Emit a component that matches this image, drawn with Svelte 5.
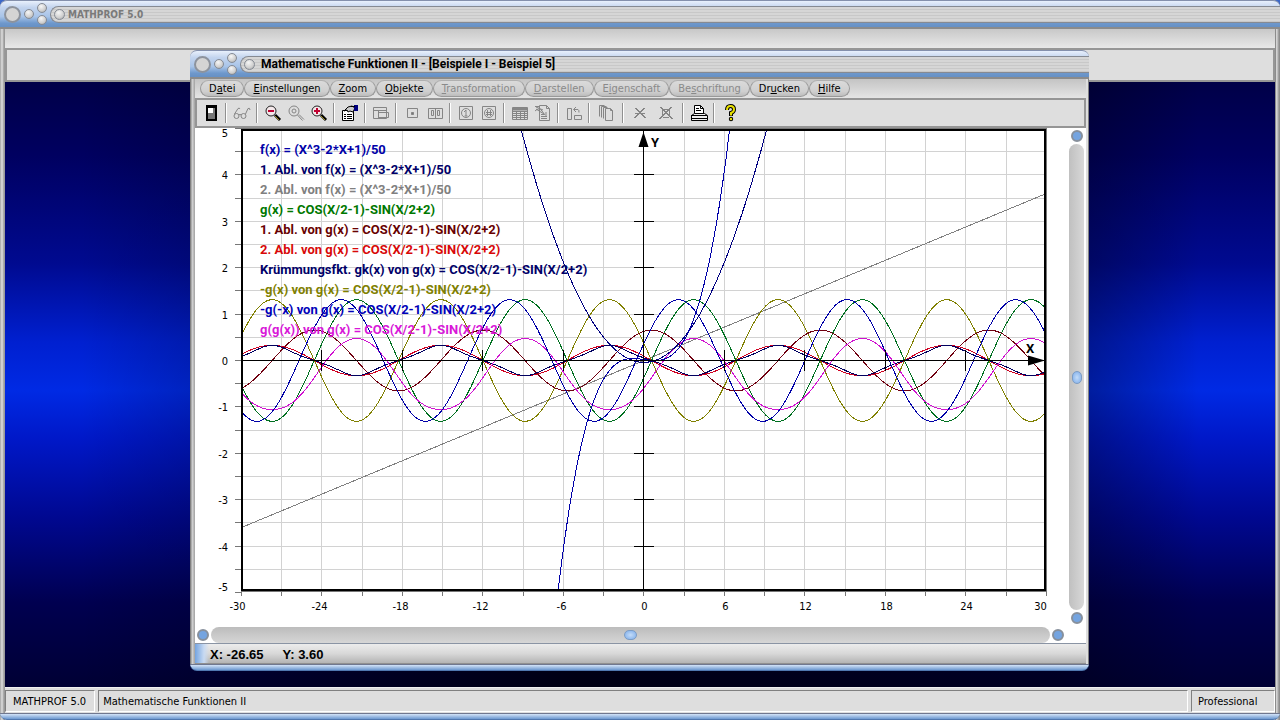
<script>
  const menus = [
    { pre: 'D', key: 'a', post: 'tei' },
    { pre: '', key: 'E', post: 'instellungen' },
    { pre: '', key: 'Z', post: 'oom' },
    { pre: '', key: 'O', post: 'bjekte' },
    { pre: '', key: 'T', post: 'ransformation', off: true },
    { pre: '', key: 'D', post: 'arstellen', off: true },
    { pre: 'E', key: 'i', post: 'genschaft', off: true },
    { pre: 'Be', key: 's', post: 'chriftung', off: true },
    { pre: 'Dr', key: 'u', post: 'cken' },
    { pre: '', key: 'H', post: 'ilfe' }
  ];

  const tools = [
    [{ id: 'panel', label: 'Fenster' }],
    [{ id: 'glasses', label: 'Ansicht', off: true }],
    [
      { id: 'zoomout', label: 'Verkleinern' },
      { id: 'zoomreset', label: 'Originalansicht', off: true },
      { id: 'zoomin', label: 'Vergrößern' }
    ],
    [{ id: 'props', label: 'Eigenschaften' }],
    [{ id: 'layout', label: 'Layout', off: true }],
    [
      { id: 'point', label: 'Punkt', off: true },
      { id: 'points', label: 'Punkte', off: true }
    ],
    [
      { id: 'info', label: 'Information', off: true },
      { id: 'hash', label: 'Werte', off: true }
    ],
    [
      { id: 'table', label: 'Tabelle', off: true },
      { id: 'report', label: 'Bericht', off: true }
    ],
    [{ id: 'swap', label: 'Tauschen', off: true }],
    [{ id: 'pages', label: 'Seiten', off: true, wide: true }],
    [
      { id: 'cross', label: 'Löschen', off: true, wide: true },
      { id: 'crossall', label: 'Alle löschen', off: true, wide: true }
    ],
    [{ id: 'print', label: 'Drucken' }],
    [{ id: 'help', label: 'Hilfe' }]
  ];

  // Plot geometry in view box units
  const OX = 448.9;
  const OY = 232.5;
  const UX = 13.42;
  const UY = 46.4;
  const px = (x) => Math.round(OX + x * UX - 0.5) + 0.5;
  const py = (y) => Math.round(OY - y * UY - 0.5) + 0.5;

  const g = (x) => Math.cos(x / 2 - 1) - Math.sin(x / 2 + 2);
  const g1 = (x) => -Math.sin(x / 2 - 1) / 2 - Math.cos(x / 2 + 2) / 2;
  const g2 = (x) => -Math.cos(x / 2 - 1) / 4 + Math.sin(x / 2 + 2) / 4;

  const curves = [
    { color: '#808080', fn: (x) => (6 * x) / 50 },
    { color: '#808000', fn: (x) => -g(x) },
    { color: '#007020', fn: g },
    { color: '#700010', fn: g1 },
    { color: '#d00020', fn: g2 },
    { color: '#000060', fn: (x) => g2(x) / Math.pow(1 + g1(x) ** 2, 1.5) },
    { color: '#d010d0', fn: (x) => g(g(x)) },
    { color: '#0000a8', fn: (x) => -g(-x) },
    { color: '#000080', fn: (x) => (3 * x * x - 2) / 50 },
    { color: '#0000a8', fn: (x) => (x ** 3 - 2 * x + 1) / 50 }
  ];

  function trace(fn) {
    const pts = [];
    for (let x = -30; x <= 30; x += 0.1) {
      const y = fn(x);
      if (Math.abs(y) < 6) pts.push(`${(OX + x * UX).toFixed(1)},${(OY - y * UY).toFixed(1)}`);
    }
    return pts.join(' ');
  }

  const G = 'g(x) = COS(X/2-1)-SIN(X/2+2)';
  const F = 'f(x) = (X^3-2*X+1)/50';
  const legend = [
    { color: '#0000a8', text: F },
    { color: '#000068', text: '1. Abl. von ' + F },
    { color: '#808080', text: '2. Abl. von ' + F },
    { color: '#007800', text: G },
    { color: '#680000', text: '1. Abl. von ' + G },
    { color: '#d80808', text: '2. Abl. von ' + G },
    { color: '#000068', text: 'Krümmungsfkt. gk(x) von ' + G },
    { color: '#808000', text: '-g(x) von ' + G },
    { color: '#0000b8', text: '-g(-x) von ' + G },
    { color: '#d818d8', text: 'g(g(x)) von ' + G }
  ];

  const xs = Array.from({ length: 21 }, (_, i) => -30 + i * 3);
  const ys = Array.from({ length: 21 }, (_, i) => -5 + i * 0.5);
  const xLabels = xs.filter((v) => v % 6 === 0);
  const yLabels = ys.filter((v) => Number.isInteger(v));
  const labelX = (v) => (v === -30 ? px(v) - 4 : v === 30 ? px(v) - 6 : v < 0 ? px(v) - 2 : px(v) + 1);
  const labelY = (v) => (v === 5 ? 9 : v === -5 ? 463 : py(v) + 4);

  let panX = $state(50);
  let panY = $state(50);
</script>

{#snippet titlebar(text, active)}
  <header class="titlebar">
    <button class="orb big" aria-label="Schließen"></button>
    <button class="orb" aria-label="Minimieren"></button>
    <span class="pair">
      <button class="orb" aria-label="Maximieren"></button>
      <button class="orb" aria-label="Wiederherstellen"></button>
    </span>
    <div class="slot" class:active>
      <button class="orb mid" aria-label="Systemmenü"></button>
      <h1>{text}</h1>
    </div>
  </header>
{/snippet}

{#snippet icon(id)}
  <svg class="icon" width="20" height="18" viewBox="0 0 20 18" aria-hidden="true">
    {#if id === 'panel'}
      <path fill="#000" d="M5 1h11v16H5z" />
      <path fill="#777" d="M7 4h7v11H7z" />
      <path fill="#fff" d="M7 4h5v5H7z" />
    {:else if id === 'glasses'}
      <g class="dim">
        <circle cx="4.5" cy="12" r="2.5" /><circle cx="11.5" cy="12" r="2.5" />
        <path d="M7 11q1-1.500 2 0M2.500 10L6 4.500q1.500-1 2 .5M13.500 10L16 4.500q2-1 2 1.500" />
      </g>
    {:else if id === 'zoomout' || id === 'zoomin'}
      <circle cx="8" cy="7" r="5" fill="#f4e8ea" stroke="#222" />
      <path d="M12 11l5 5" stroke="#000" stroke-width="3" />
      <path d="M12 12l4 4" stroke="#a09020" />
      <path d="M5 7h6" stroke="#c00030" stroke-width="2" />
      {#if id === 'zoomin'}<path d="M8 4v6" stroke="#c00030" stroke-width="2" />{/if}
    {:else if id === 'zoomreset'}
      <g class="dim">
        <circle cx="8" cy="7" r="5" /><circle cx="8" cy="7" r="2" />
        <path d="M11.500 11l5 5.500M13 10.500l5 5" />
      </g>
    {:else if id === 'props'}
      <path d="M2.500 6.500h11v10h-11z" fill="#fff" stroke="#000" />
      <path d="M4 10.500h2M7 10.500h5M4 12.500h2M7 12.500h5M4 14.500h2M7 14.500h5" stroke="#000" />
      <path d="M4 7l4-4 4-1 3 2-2 4-3-1-2 1-1-2z" fill="#ccc" stroke="#000" />
      <path d="M14 1h4v6h-4z" fill="#000080" />
      <path d="M11 2.500h4" stroke="#000" />
    {:else if id === 'layout'}
      <g class="dim"><path d="M2.500 3.500h13v11h-13zM2.500 6.500h13M7.500 6.500v8M7.500 8.500h10v5h-10" /></g>
    {:else if id === 'point'}
      <g class="dim"><path d="M5.500 4.500h10v9h-10z" /><path d="M9.500 8.500h2v2h-2z" fill="#777" /></g>
    {:else if id === 'points'}
      <g class="dim"><path d="M3.500 4.500h14v10h-14zM10.500 4.500v10M6.500 6.500h2v5h-2zM12.500 6.500h2v5h-2z" /></g>
    {:else if id === 'info'}
      <g class="dim"><path d="M3.500 2.500h13v13h-13z" /><circle cx="10" cy="9" r="4.500" /><path d="M8 8l2-2v6M8.500 12h3" /></g>
    {:else if id === 'hash'}
      <g class="dim"><path d="M3.500 2.500h13v13h-13z" /><circle cx="10" cy="9" r="4.500" /><path d="M8.500 6v6M11.500 6v6M7 8.500h6M7 10.500h6" /></g>
    {:else if id === 'table'}
      <g class="dim"><path d="M2.500 3.500h15v12h-15zM3 7.500h14M3 9.500h14M3 11.500h14M3 13.500h14M6.500 7v8M10.500 7v8M14.500 7v8" /><path d="M3 4h14v2H3z" fill="#888" /></g>
    {:else if id === 'report'}
      <g class="dim"><path d="M6.500 1.500h7l3 3v12h-10zM13.500 1.500v3h3M2 2.500h5M3 5l8 5M2 7q4-4 7 0l3 4M3 3l7 3M8 10.500h3M8 12.500h6M8 14.500h6M13 8v5" /></g>
    {:else if id === 'swap'}
      <g class="dim"><path d="M3.500 4.500h4v11h-4zM10.500 11.500h7v4h-7zM10 5.500h4q1 0 1 3M12 3l-2.500 2.500L12 8" /></g>
    {:else if id === 'pages'}
      <g class="dim"><path d="M3.500 12.500v-11h5M5.500 13.500v-11h5M7.500 14.500v-11h4M9.500 4.500h5l2 2v10h-7zM14.500 4.500v2h2" /></g>
    {:else if id === 'cross'}
      <g class="dim"><path d="M5 4l10 10M15 4L5 14M6 4l10 10M14 4L4 14M5 9.500h10" /></g>
    {:else if id === 'crossall'}
      <g class="dim"><path d="M4 3l12 12M16 3L4 15M5 3l12 12M15 3L3 15M7 5.500h6M7 13.500h6M6.500 6v6M13.500 6v6" /></g>
    {:else if id === 'print'}
      <path d="M5.500 9.500v-8h6l3 3v5" fill="#fff" stroke="#000" />
      <path d="M7 4.500h3M7 6.500h5M11.500 1.500v3h3" fill="none" stroke="#000" />
      <path d="M2.500 11.500l3-2h10l3 2v5h-16z" fill="#eee" stroke="#000" />
      <path d="M2 11.500h16M3 14.500h15" stroke="#000" />
    {:else if id === 'help'}
      <path d="M7 6q0-4 3.500-4T14 5.500Q14 8 11 9v3" fill="none" stroke="#000" stroke-width="4" />
      <circle cx="11" cy="15" r="2.200" fill="#000" />
      <path d="M7 6q0-4 3.500-4T14 5.500Q14 8 11 9v2.500" fill="none" stroke="#e8e000" stroke-width="2" />
      <circle cx="11" cy="15" r="1.200" fill="#e8e000" />
    {/if}
  </svg>
{/snippet}

<div class="app">
  {@render titlebar('MATHPROF 5.0', false)}
  <div class="band"></div>
  <div class="tray"></div>
  <div class="desktop"></div>
  <footer class="appstatus">
    <span>MATHPROF 5.0</span>
    <span class="grow">Mathematische Funktionen II</span>
    <span class="edition">Professional</span>
  </footer>
  <div class="bottom"></div>

  <section class="window">
    {@render titlebar('Mathematische Funktionen II - [Beispiele I - Beispiel 5]', true)}
    <div class="body">
      <nav class="menubar">
        {#each menus as m}
          <button disabled={m.off}>{m.pre}<u>{m.key}</u>{m.post}</button>
        {/each}
      </nav>
      <div class="toolbar">
        {#each tools as group}
          <div class="group">
            {#each group as t}
              <button class:wide={t.wide} disabled={t.off} aria-label={t.label}>{@render icon(t.id)}</button>
            {/each}
          </div>
        {/each}
      </div>

      <div class="view">
        <svg class="plot" viewBox="0 0 874 498" role="img" aria-label="Funktionsgraphen">
          <defs>
            <clipPath id="area"><rect x="48" y="3" width="801" height="459" /></clipPath>
          </defs>
          <g class="grid">
            {#each xs.slice(1, -1) as x}<path d="M{px(x)} 3V462" />{/each}
            {#each ys.slice(1, -1) as y}<path d="M48 {py(y)}H849" />{/each}
          </g>
          <g class="scale">
            <path d="M46.500 0V463.500H851.500V1" />
            <path d="M46 0.500H852" />
            {#each xs as x}<path d="M{px(x)} 464v4" />{/each}
            {#each ys as y}<path d="M46 {py(y)}h-6" />{/each}
          </g>
          <g clip-path="url(#area)">
            {#each curves as c}
              <polyline class="curve" points={trace(c.fn)} stroke={c.color} />
            {/each}
          </g>
          <g class="axes">
            <path d="M48 232.500H850M448.500 3V462" />
            {#each yLabels.slice(1, -1) as y}<path d="M439 {py(y)}h20" />{/each}
            {#each xLabels.slice(1, -1) as x}<path d="M{px(x)} 222v21" />{/each}
          </g>
          <path class="frame" d="M47 2H850V462H47z" />
          <path d="M448.500 4l5 15h-10zM850 232.500l-17-5v10z" />
          <g class="numbers">
            {#each xLabels as x}<text x={labelX(x)} y="482" text-anchor="middle">{x}</text>{/each}
            {#each yLabels as y}<text x="33" y={labelY(y)} text-anchor="end">{y}</text>{/each}
          </g>
          <g class="names">
            <text x="456" y="19">Y</text>
            <text x="831" y="225">X</text>
          </g>
          <g class="legend">
            {#each legend as l, i}<text x="65" y={26 + i * 20} fill={l.color}>{l.text}</text>{/each}
          </g>
        </svg>
        <div class="vscroll">
          <button class="dot" aria-label="Nach oben"></button>
          <input type="range" min="0" max="100" bind:value={panY} aria-label="Vertikal verschieben" />
          <button class="dot" aria-label="Nach unten"></button>
        </div>
      </div>
      <div class="hscroll">
        <button class="dot" aria-label="Nach links"></button>
        <input type="range" min="0" max="100" bind:value={panX} aria-label="Horizontal verschieben" />
        <button class="dot" aria-label="Nach rechts"></button>
      </div>
      <footer class="coords">
        <output>X: -26.65</output>
        <output>Y: 3.60</output>
      </footer>
    </div>
    <div class="bottom"></div>
  </section>
</div>

<style>
  :global(body) {
    margin: 0;
    background: #3c68c8;
  }
  .app,
  .app *,
  .app *::before {
    box-sizing: border-box;
  }
  .app {
    position: relative;
    display: flex;
    flex-direction: column;
    min-height: 100vh;
    font: 11px/14px 'DejaVu Sans Condensed', 'Liberation Sans', sans-serif;
    color: #000;
    background:
      linear-gradient(270deg, #8c8c8c 1px, #b4b4b4 2px, #dedede 4px, #8c8c8c 4px, #8c8c8c 5px, transparent 5px),
      linear-gradient(90deg, #a0a0a0, #e0e0e0 2px, #999 4px, #999 5px, #dedede 5px);
    border-radius: 7px 7px 0 0;
  }
  button {
    margin: 0;
    padding: 0;
    border: 0;
    background: none;
    font: inherit;
    color: inherit;
  }

  /* title bars */
  .titlebar {
    display: flex;
    align-items: center;
    gap: 3px;
    height: 29px;
    padding-left: 4px;
    border-radius: 7px 7px 0 0;
    border-top: 1px solid #8490ac;
    border-bottom: 2px solid #8b8b8b;
    background: linear-gradient(#e8f0fc, #c3d4ee 25%, #a8c4e8 60%, #6e98cc 85%, #6690c4);
  }
  .orb {
    flex: none;
    width: 10px;
    height: 10px;
    border: 1px solid #858b95;
    border-radius: 50%;
    background: radial-gradient(circle at 40% 30%, #f6f6f6, #cfcfcf 60%, #a0a0a0);
  }
  .orb.big {
    width: 17px;
    height: 17px;
    border: 2px solid #8d939d;
    background: #d4d4d4;
  }
  .orb.mid {
    width: 11px;
    height: 11px;
  }
  .pair {
    display: flex;
    flex-direction: column;
    gap: 2px;
  }
  .slot {
    flex: 1;
    display: flex;
    align-items: center;
    gap: 3px;
    height: 17px;
    padding-left: 3px;
    border: 1px solid #868a92;
    border-right: 0;
    border-radius: 9px 0 0 9px;
    background: repeating-linear-gradient(#d6d6d6 0 2px, #c8c8c8 2px 3px);
  }
  .slot.active {
    gap: 6px;
  }
  h1 {
    margin: 0;
    font-size: 10px;
    line-height: 13px;
    color: #7a7a7a;
  }
  .active h1 {
    font-family: Roboto, 'Liberation Sans', sans-serif;
    font-size: 12px;
    color: #000;
  }

  /* main frame */
  .band {
    height: 21px;
    margin: 0 5px;
    border-bottom: 2px solid #969696;
    background: linear-gradient(#c8c8c8, #e8e8e8);
  }
  .tray {
    height: 32px;
    margin: 0 5px;
    border: solid #969696;
    border-width: 0 2px 2px;
    background: #dedede;
  }
  .desktop {
    flex: 1;
    margin: 0 5px;
    background:
      linear-gradient(90deg, transparent 6%, rgba(0, 0, 8, 0.75) 45%, rgba(0, 0, 8, 0.4) 83%, transparent 94%),
      linear-gradient(#000048, #000060 12%, #000a90 30%, #0020d0 43%, #002ae4 51%, #0018c8 59%, #000890 72%, #000050 86%, #000034);
  }
  .appstatus {
    display: flex;
    gap: 3px;
    height: 26px;
    margin: 0 5px;
    padding: 2px 0 1px;
    background: #dedede;
    border-top: 1px solid #f0f0f0;
  }
  .appstatus span {
    padding: 4px 8px 0 7px;
    border: 1px solid;
    border-color: #808080 #fff #fff #808080;
  }
  .appstatus .grow {
    flex: 1;
    padding-left: 4px;
  }
  .appstatus .edition {
    width: 84px;
    padding-left: 6px;
  }
  .bottom {
    height: 7px;
    border-top: 1px solid #707890;
    border-bottom: 1px solid #5078b0;
    border-radius: 0 0 7px 7px;
    background: linear-gradient(#d4e4f8, #6c98d0);
  }

  /* child window, floating over the desktop */
  .window {
    position: absolute;
    top: 50px;
    left: 190px;
    right: 191px;
  }
  .body {
    padding: 0 2px 0 5px;
    background: linear-gradient(90deg, #808080 1px, #d8d8d8 2px, #a0a0a0 5px, #dedede 5px);
    border-right: 1px solid #808080;
  }
  .menubar {
    display: flex;
    align-items: center;
    height: 19px;
    padding-left: 5px;
    background: linear-gradient(#c4c4c4, #e4e4e4);
  }
  .menubar button {
    height: 17px;
    padding: 0 8px;
    border: 1px solid #999;
    border-top-color: #b0b0b0;
    border-radius: 9px;
    background: linear-gradient(#dadada, #cfcfcf 70%, #bcbcbc);
    line-height: 14px;
  }
  .menubar button:disabled {
    color: #8a8a8a;
  }
  .toolbar {
    display: flex;
    align-items: center;
    height: 30px;
    padding-left: 2px;
    border: 2px solid #959595;
    background: #dedede;
  }
  .group {
    display: flex;
    align-items: center;
  }
  .group + .group::before {
    content: '';
    width: 2px;
    height: 20px;
    margin: 0 3px;
    border-left: 1px solid #909090;
    border-right: 1px solid #fff;
  }
  .group button {
    display: grid;
    place-items: center;
    width: 23px;
    height: 22px;
  }
  .group button.wide {
    width: 26px;
  }
  .icon {
    display: block;
  }
  .dim {
    fill: none;
    stroke: #858585;
  }

  .view {
    display: flex;
    background: #fff;
  }
  .plot {
    flex: 1;
    display: block;
    min-width: 0;
    font-size: 11px;
  }
  .grid path,
  .scale path,
  .axes path,
  .frame,
  .curve {
    fill: none;
    shape-rendering: crispEdges;
  }
  .grid path {
    stroke: #d2d2d2;
  }
  .scale path {
    stroke: #777;
  }
  .axes path {
    stroke: #000;
  }
  .frame {
    stroke: #000;
    stroke-width: 2;
  }
  .names,
  .legend {
    font: bold 13px Roboto, 'Liberation Sans', sans-serif;
  }

  .vscroll,
  .hscroll {
    flex: none;
    display: flex;
    align-items: center;
  }
  .vscroll {
    flex-direction: column;
    width: 17px;
    padding: 0 2px 0 0;
  }
  .hscroll {
    height: 17px;
    padding-right: 20px;
    background: #fff;
  }
  .dot {
    flex: none;
    width: 12px;
    height: 12px;
    margin: 2px;
    border: 2px solid #87909c;
    border-radius: 50%;
    background: #74a4e0;
  }
  input[type='range'] {
    appearance: none;
    flex: 1;
    min-width: 0;
    min-height: 0;
    margin: 0;
    border-radius: 8px;
  }
  .vscroll input {
    writing-mode: vertical-lr;
    width: 15px;
    background: linear-gradient(90deg, #c0c0c0, #d8d8d8);
  }
  .hscroll input {
    height: 16px;
    background: linear-gradient(#bcbcbc, #d6d6d6);
  }
  input[type='range']::-webkit-slider-thumb {
    appearance: none;
    width: 13px;
    height: 10px;
    border: 1px solid #7c9cc4;
    border-radius: 5px;
    background: radial-gradient(#c4dcf8, #7cacea);
  }
  .vscroll input::-webkit-slider-thumb {
    width: 10px;
    height: 13px;
  }

  .coords {
    display: flex;
    gap: 19px;
    height: 21px;
    padding: 3px 0 0 15px;
    border-top: 1px solid #8a94a4;
    border-bottom: 1px solid #909090;
    background: linear-gradient(90deg, #74a4e0, #c8daf2 9px, transparent 14px), linear-gradient(#ececec, #d8d8d8 50%, #b4b4b4);
    font: bold 13px/15px 'Liberation Sans', sans-serif;
  }
</style>
